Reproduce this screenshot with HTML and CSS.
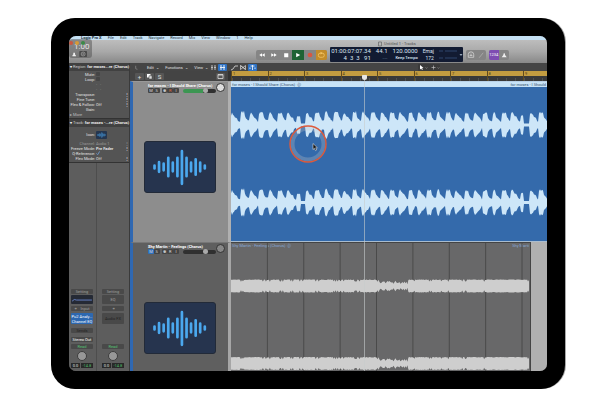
FILE: index.html
```html
<!DOCTYPE html>
<html lang="en">
<head>
<meta charset="utf-8">
<title>Untitled 1 - Tracks</title>
<link rel="stylesheet" href="styles.css">
</head>
<body>
<svg class="defs" aria-hidden="true">
  <symbol id="wave-icon" viewBox="0 0 72 52">
    <path d="M9.500 24.500v3M14.200 21v10M19 22.500v7M23.800 16.500v19M28.500 21.500v9M33.300 16.500v19M38 9.500v34M42.800 16.500v19M47.500 21.500v9M52.300 18v16M57 21.500v9M61.800 24.500v3" fill="none" stroke="#4ba8ee" stroke-width="2.800" stroke-linecap="round"/>
  </symbol>
</svg>
<main class="device">
  <div class="screen">
    <nav class="menubar">
      <a href="#"><b>Logic Pro X</b></a><a href="#">File</a><a href="#">Edit</a><a href="#">Track</a><a href="#">Navigate</a><a href="#">Record</a><a href="#">Mix</a><a href="#">View</a><a href="#">Window</a><a href="#">1</a><a href="#">Help</a>
    </nav>
    <header class="toolbar">
      <div class="lights"><i class="red"></i><i class="amber"></i><i class="green"></i></div>
      <div class="clock">
        <span>1:00</span>
        <svg viewBox="0 0 22 7"><path d="M1 6V5l1-1V2h2v2l1 1v1z" fill="#eee"/><rect x="9" width="9" height="7" rx="1" fill="#4a4a4a"/><circle cx="13.500" cy="3.500" r="2.300" fill="none" stroke="#bbb" stroke-width=".7"/><path d="M13.500 2.300v2.400" stroke="#bbb" stroke-width=".8"/></svg>
      </div>
      <h1><svg viewBox="0 0 4 5"><path d="M.5.500h3v4h-3z" fill="none" stroke="#666" stroke-width=".7"/></svg>Untitled 1 - Tracks</h1>
      <div class="controls">
        <div class="group transport">
          <button aria-label="Rewind"><svg viewBox="0 0 12 11"><path d="M6 3.500v4L3 5.500zM9 3.500v4L6 5.500z" fill="#fff"/></svg></button>
          <button aria-label="Forward"><svg viewBox="0 0 12 11"><path d="M3 3.500v4L6 5.500zM6 3.500v4l3-2z" fill="#fff"/></svg></button>
          <button aria-label="Stop"><svg viewBox="0 0 12 11"><path d="M4 3.500h4.500v4.500H4z" fill="#fff"/></svg></button>
          <button class="play" aria-label="Play"><svg viewBox="0 0 12 11"><path d="M4 3.200v4.800l4.500-2.400z" fill="#fff"/></svg></button>
          <button aria-label="Record"><svg viewBox="0 0 12 11"><circle cx="6" cy="5.500" r="2.600" fill="#d9573f"/></svg></button>
          <button class="cycle" aria-label="Cycle"><svg viewBox="0 0 12 11"><rect x="2.500" y="3.500" width="6.500" height="4.500" rx="2" fill="none" stroke="#f3c566" stroke-width=".9"/><path d="M5 2v3l2.300-1.500z" fill="#f3c566"/></svg></button>
        </div>
        <div class="lcd">
          <div class="time"><span>01:00:07:07.34</span><span>4&nbsp; 3&nbsp; 3 &nbsp; 91</span></div>
          <div class="rate"><span>44.1</span><span class="faint">---</span></div>
          <div class="tempo"><span>120.0000</span><span class="small">Keep Tempo</span></div>
          <div class="key"><span class="small">Emaj</span><span class="small">172</span></div>
          <svg class="meters" viewBox="0 0 24 13"><path d="M0 3h4M0 10h4M6 3h12M6 10h12" stroke="#38527c" stroke-width=".8"/><path d="M20.500 6h3L22 8z" fill="#9ab"/></svg>
        </div>
        <div class="group">
          <button class="narrow" aria-label="Tuner"><svg viewBox="0 0 10 11"><path d="M2 8V5a3 3 0 0 1 6 0v3zM3.500 6h3M5 6V4" fill="none" stroke="#ddd" stroke-width=".8"/></svg></button>
          <button class="narrow" aria-label="Edit"><svg viewBox="0 0 10 11"><path d="M3 8.500L7.500 3" stroke="#aaa" stroke-width="1"/></svg></button>
        </div>
        <div class="group">
          <button class="narrow count" aria-label="Count in">1234</button>
          <button class="narrow" aria-label="Metronome"><svg viewBox="0 0 10 11"><path d="M2.500 8h5.500L6.200 5.500 5.800 3.500H4.700L4.200 5.500z" fill="#eee"/></svg></button>
        </div>
      </div>
    </header>
    <div class="workspace">
      <aside class="inspector">
        <h2>▾ <span>Region:</span> for moses...re (Chorus)</h2>
        <div class="props">
          <div class="row"><label for="mute">Mute:</label><input type="checkbox" id="mute"></div>
          <div class="row"><label for="loop">Loop:</label><input type="checkbox" id="loop"></div>
          <div class="row dim"><span></span><span>- &nbsp; -</span></div>
          <div class="row dim"><span></span><span>- &nbsp; -</span></div>
          <div class="row"><span>Transpose:</span><span></span><i>⋮</i></div>
          <div class="row"><span>Fine Tune:</span><span></span><i>⋮</i></div>
          <div class="row"><span>Flex &amp; Follow:</span><span>Off</span><i>⋮</i></div>
          <div class="row"><span>Gain:</span><span></span></div>
          <div class="more">▸ More</div>
        </div>
        <h2>▾ <span>Track:</span> for moses -...re (Chorus)</h2>
        <div class="props track-props">
          <div class="row icon-row"><span>Icon:</span><svg class="mini" viewBox="0 0 72 52"><use href="#wave-icon"/></svg></div>
          <div class="row dim"><span>Channel:</span><span>Audio 1</span><i>⋮</i></div>
          <div class="row"><span>Freeze Mode:</span><b>Pre Fader</b><i>⋮</i></div>
          <div class="row"><label for="qref">Q-Reference:</label><input type="checkbox" id="qref" checked></div>
          <div class="row"><span>Flex Mode:</span><span>Off</span><i>⋮</i></div>
        </div>
        <div class="strips">
          <div class="strip">
            <button>Setting</button>
            <button class="eq on" aria-label="EQ"><svg viewBox="0 0 20 8"><path d="M1 5.500l2-1.500 2 .500h14" fill="none" stroke="#6b88ce" stroke-width=".8"/></svg></button>
            <button class="input">⚭ &nbsp; Input</button>
            <button class="fx on">Pu2 Analy...<br>Channel EQ</button>
            <button class="sends">Sends</button>
            <button class="out">Stereo Out</button>
            <button class="read">Read</button>
            <span class="knob"></span>
            <div class="vals"><span>0.0</span><span>-14.8</span></div>
          </div>
          <div class="strip">
            <button>Setting</button>
            <button class="eq">EQ</button>
            <button class="input">⚭</button>
            <button class="fx">Audio FX</button>
            <span class="fill"></span>
            <button class="read">Read</button>
            <span class="knob"></span>
            <div class="vals"><span>0.0</span><span>-14.8</span></div>
          </div>
        </div>
      </aside>
      <section class="tracks">
        <div class="actions">
          <button class="pick" aria-label="Hide"><svg viewBox="0 0 9 8"><path d="M3 2v3q0 1 2 1" fill="none" stroke="#999" stroke-width=".7"/></svg></button>
          <div class="menus"><button>Edit &nbsp;⌄</button><button>Functions &nbsp;⌄</button><button>View &nbsp;⌄</button></div>
          <div class="views">
            <button aria-label="List"><svg viewBox="0 0 9 7"><path d="M2 2h2M5 2h2M2 3.500h2M5 3.500h2M2 5h2M5 5h2" stroke="#ddd" stroke-width=".8"/></svg></button>
            <button class="on" aria-label="Grid"><svg viewBox="0 0 9 7"><path d="M2 2h2M5 2h2M2 3.500h5M2 5h2M5 5h2" stroke="#fff" stroke-width=".9"/></svg></button>
          </div>
          <div class="tools">
            <button aria-label="Automation"><svg viewBox="0 0 9 7"><path d="M1 6l2-1 2-3h3" fill="none" stroke="#ddd" stroke-width=".8"/></svg></button>
            <button aria-label="Flex"><svg viewBox="0 0 9 7"><path d="M1.500 1.500v4l5-4v4zM1.500 1.500l5 4" fill="none" stroke="#ddd" stroke-width=".7"/></svg></button>
            <button class="on" aria-label="Catch"><svg viewBox="0 0 9 7"><path d="M4.500 1v5M2.500 2h4M2 3.500v1.500M7 3.500v1.500" stroke="#fff" stroke-width=".8"/></svg></button>
          </div>
          <div class="cursors">
            <button aria-label="Pointer"><svg viewBox="0 0 10 7"><path d="M2 1v4.500l1.200-1 .8 1.500.8-.4-.7-1.500H5.500z" fill="#fff"/><path d="M7.500 3.500l1 .8 1-.8" fill="none" stroke="#aaa" stroke-width=".5"/></svg></button>
            <button aria-label="Marquee"><svg viewBox="0 0 10 7"><path d="M3.500 1.500v4M1.500 3.500h4" stroke="#ccc" stroke-width=".6"/><path d="M7.500 3.500l1 .8 1-.8" fill="none" stroke="#aaa" stroke-width=".5"/></svg></button>
          </div>
        </div>
        <div class="ruler-row">
          <div class="add">
            <button>+</button>
            <button aria-label="Duplicate"><svg viewBox="0 0 8 7"><path d="M1.500 1h3.500v3.500H1.500z" fill="#fff"/><path d="M3.500 2.800h3V6h-3z" fill="#ddd" stroke="#444" stroke-width=".5"/></svg></button>
            <button>S</button>
            <button class="panel" aria-label="Header settings"><svg viewBox="0 0 8 7"><path d="M1.500 1.500h5v4h-5zM1.500 2h5" fill="none" stroke="#ddd" stroke-width=".8"/></svg></button>
          </div>
          <div class="ruler"><span>1</span><span>2</span><span>3</span><span>4</span><span>5</span><span>6</span><span>7</span><span>8</span><span>9</span></div>
        </div>
        <article class="track selected">
          <div class="head">
            <div class="info">
              <div class="name">for moses - I Should Share (Chorus)</div>
              <div class="mix"><button>M</button><button>S</button><button class="sp">✽</button><button class="rec">R</button><button>I</button><input type="range" aria-label="Volume" value="72"></div>
            </div>
            <span class="pan"></span>
            <svg class="art" viewBox="0 0 72 52"><use href="#wave-icon"/></svg>
          </div>
          <div class="lane">
            <div class="region">
              <div class="title"><span>for moses - I Should Share (Chorus) &nbsp;⓪</span><span>for moses - I Should</span></div>
              <svg class="wave" data-kind="beats" viewBox="0 0 316 153" preserveAspectRatio="none"></svg>
            </div>
          </div>
        </article>
        <article class="track">
          <div class="head">
            <div class="info">
              <div class="name">Shy Martin - Feelings (Chorus)</div>
              <div class="mix"><button class="on">M</button><button>S</button><button class="sp">✽</button><button>R</button><button>I</button><input type="range" aria-label="Volume" value="72"></div>
            </div>
            <span class="pan"></span>
            <svg class="art" viewBox="0 0 72 52"><use href="#wave-icon"/></svg>
          </div>
          <div class="lane">
            <div class="region">
              <div class="title"><span>Shy Martin - Feelings (Chorus) &nbsp;⓪</span><span>Shy Marti</span></div>
              <svg class="wave" data-kind="dense" viewBox="0 0 300 122" preserveAspectRatio="none"></svg>
            </div>
          </div>
        </article>
        <div class="playhead"></div>
        <svg class="pointer" viewBox="0 0 38 38"><circle cx="19" cy="19" r="15.500" fill="none" stroke="#c9c9c9" stroke-opacity=".28" stroke-width="4"/><circle cx="19" cy="19" r="18" fill="none" stroke="#dd5a3c" stroke-width="1.500"/><path d="M24 18.500v6l1.400-1.200 1.100 2.300 1.200-.6-1.100-2.200h1.800z" fill="#111" stroke="#ddd" stroke-width=".6"/></svg>
      </section>
    </div>
  </div>
</main>
<script src="app.js"></script>
</body>
</html>
```
FILE: styles.css
```css
* { box-sizing: border-box; }
body {
  margin: 0;
  min-height: 100vh;
  padding: 18px 46px 19px 51px;
  display: flex;
  background: #fff;
  font: 4px/5px Roboto, "Liberation Sans", sans-serif;
  color: #e2e2e2;
}
button {
  font: inherit;
  color: inherit;
  border: 0;
  padding: 0;
  margin: 0;
  background: none;
  display: block;
  white-space: nowrap;
}
button svg { display: block; width: 100%; height: 100%; }
i { font-style: normal; }
.defs { position: absolute; width: 0; height: 0; }
.device {
  flex: 1;
  min-width: 0;
  display: flex;
  padding: 18px;
  background: #000;
  border-radius: 24px;
  box-shadow: 1px 0 0 #a8a8a8;
}
.screen {
  flex: 1;
  min-width: 0;
  display: flex;
  flex-direction: column;
  overflow: hidden;
  border-radius: 7px;
  background: #5d5d5d;
}

.menubar {
  display: flex;
  gap: 6px;
  padding-left: 12px;
  line-height: 4px;
  background: #c4e0f3;
}
.menubar a { color: #23303c; text-decoration: none; }

.toolbar {
  position: relative;
  height: 23px;
  padding-top: 1px;
  background: linear-gradient(#bdbdbd, #a9a9a9 50%, #888);
}
.lights { position: absolute; z-index: 1; top: 1px; left: 0; display: flex; gap: 2px; }
.lights i { width: 4px; height: 4px; border-radius: 50%; background: #cc553d; }
.lights .amber { background: #d79a35; }
.lights .green { background: #3c8a48; }
.clock {
  position: absolute;
  top: -1px;
  left: 0;
  width: 23px;
  height: 19px;
  padding-top: 4px;
  padding-left: 5px;
  border-radius: 3px;
  background: rgb(70 70 70 / 45%);
  color: #e6e6e6;
  font-size: 8px;
  line-height: 8px;
}
.clock svg { display: block; width: 22px; height: 6px; margin-left: -4px; }
h1 {
  display: flex;
  justify-content: center;
  gap: 2px;
  margin: 0;
  padding-left: 178px;
  font-size: 4px;
  font-weight: 400;
  line-height: 6px;
  color: #555;
}
h1 svg { width: 4px; height: 6px; }
.controls {
  display: flex;
  align-items: center;
  justify-content: center;
  gap: 3px;
  padding-left: 149px;
}
.controls > * { flex: none; }
.group { display: flex; height: 10px; border-radius: 2px; overflow: hidden; background: #858585; }
.group button { width: 12px; }
.group .narrow { width: 10px; }
.group .play { background: #1f6334; }
.group .cycle { background: #c38c29; width: 11px; }
.group .count { background: #7e4cb2; color: #fff; }
.lcd {
  display: flex;
  gap: 5px;
  height: 15px;
  padding: 1px 0 1px 1px;
  background: #121b32;
  border-radius: 1px;
  color: #dde6f3;
  font-size: 6px;
  line-height: 6px;
}
.lcd > div { display: flex; flex-direction: column; gap: 1px; align-items: flex-end; }
.lcd .small { font-size: 5px; }
.lcd .tempo .small { font-size: 4px; font-weight: 500; }
.lcd .faint { color: #51617d; }
.meters { width: 24px; height: 13px; }

.workspace { flex: 1; min-height: 0; display: flex; }
.inspector {
  width: 61px;
  flex: none;
  display: flex;
  flex-direction: column;
  background: #5d5d5d;
  border-right: 1px solid #3a3a3a;
}
h2 {
  margin: 0;
  height: 8px;
  padding-left: 1px;
  font-size: 4px;
  line-height: 8px;
  white-space: nowrap;
  background: #414141;
  color: #eee;
}
h2 span { font-weight: 400; color: #ccc; }
.props { padding: 1px 0; background: #545454; border-bottom: 1px solid #333; }
.row { display: grid; grid-template-columns: 26px 1fr 4px; column-gap: 1px; height: 5px; white-space: nowrap; }
.row > :first-child { text-align: right; justify-self: end; }
.dim { color: #999; }
.row input {
  appearance: none;
  width: 4px;
  height: 4px;
  margin: 0;
  border-radius: 1px;
  background: #454545;
}
.row input:checked { background: #6ea2dd; clip-path: polygon(0 50%, 40% 80%, 85% 0, 100% 10%, 45% 100%, 0 65%); }
.more { padding-left: 1px; color: #bbb; }
.icon-row { height: 13px; align-items: center; }
.mini { width: 11px; height: 8px; background: #25364f; border-radius: 1px; }
.strips { flex: 1; display: grid; grid-template-columns: 28px 1fr; }
.strip {
  display: flex;
  flex-direction: column;
  justify-content: flex-end;
  align-items: center;
  gap: 2px;
  padding: 0 3px 3px 2px;
  border-right: 1px solid #4d4d4d;
}
.strip + .strip { padding: 0 5px 3px; border: 0; }
.strip button { width: 100%; height: 5px; line-height: 5px; border-radius: 1px; background: #494949; color: #a0a0a0; text-align: center; }
.strip .eq { height: 9px; margin-top: -1px; }
.strip .eq.on { background: #252a35; }
.strip .fx { height: 11px; color: #222; }
.strip .fx.on { background: #2d68b0; color: #fff; }
.strip .sends { margin: 2px 0; color: #222; }
.strip .out { background: #484848; color: #fff; }
.strip .read { color: #55c174; }
.fill { height: 16px; }
.knob { flex: none; width: 10px; height: 10px; border-radius: 50%; background: #979797; border: 1px solid #3d3d3d; }
.vals { display: flex; gap: 1px; width: 100%; }
.vals span { flex: auto; background: #292929; text-align: center; height: 5px; }
.vals span + span { color: #4fba6a; }

.tracks { position: relative; flex: 1; min-width: 0; display: flex; flex-direction: column; overflow: hidden; }
.actions { display: flex; flex: none; height: 8px; background: #454545; align-items: center; }
.actions button { height: 7px; }
.pick { width: 17px; padding-right: 3px; }
.menus { width: 61px; display: flex; justify-content: space-between; line-height: 7px; }
.views { display: flex; padding-left: 1px; width: 22px; }
.views button, .tools button { width: 9px; }
.actions .on { background: #2e72c4; border-radius: 1px; }
.tools { display: flex; }
.cursors { display: flex; gap: 2px; margin: 0 107px 0 auto; background: #3a3a3a; border-radius: 1px; }
.cursors button { width: 10px; }
.ruler-row { display: flex; flex: none; height: 10px; background: #393939; }
.add { display: flex; align-items: center; gap: 1px; width: 101px; padding: 0 3px 0 5px; background: #444; border-right: 3px solid #333; }
.add button { width: 9px; height: 7px; line-height: 7px; background: #565656; border-radius: 1px; font-size: 6px; }
.add .panel { margin-left: auto; }
.ruler { flex: 1; display: grid; grid-template-columns: repeat(8, 1fr) 24px; }
.ruler span {
  border-left: 1px solid #5f4b1f;
  padding-left: 1px;
  color: #4b3a14;
  line-height: 5px;
  background:
    repeating-linear-gradient(90deg, #505050 0 1px, transparent 1px 9px) 0 7px / 100% 3px no-repeat,
    linear-gradient(#c39c40 0 5px, transparent 5px);
}
.track { display: flex; height: 161px; flex: none; }
.track + .track { flex: 1; min-height: 129px; overflow: hidden; }
.head {
  display: grid;
  grid-template-columns: 1fr 10px;
  align-content: start;
  width: 101px;
  flex: none;
  padding: 1px 2px 0 15px;
  background: #5f5f5f;
  border-left: 3px solid #2f68b2;
  border-right: 3px solid #a6a6a6;
  border-top: 1px solid #777;
}
.selected .head { background: #8d8d8d; border-top-color: #999; border-right-color: #b0b0b0; }
.name { font-weight: 700; line-height: 5px; color: #fff; white-space: nowrap; }
.mix { display: flex; align-items: center; }
.mix button { width: 6px; height: 5px; border-radius: 1px; background: #444; color: #ddd; }
.mix .sp { margin-left: 2px; }
.mix .on { background: #2d71bf; }
.mix .rec { color: #e06a3b; }
.mix input {
  appearance: none;
  width: 33px;
  height: 4px;
  margin: 0 0 0 4px;
  border-radius: 2px;
  background: #303030;
}
.selected .mix input { background: linear-gradient(90deg, #3c9652 62%, #303030 62%); }
.mix input::-webkit-slider-thumb { appearance: none; width: 5px; height: 5px; border-radius: 50%; background: #aaa; }
.pan { width: 9px; height: 9px; border-radius: 50%; background: #888; border: 1px solid #333; }
.selected .pan { background: #ddd; }
.art {
  grid-column: 1 / -1;
  width: 72px;
  height: 52px;
  margin-top: 48px;
  margin-left: -4px;
  border-radius: 3px;
  border: 1px solid #222a38;
  background: #26344e;
}
.info { min-width: 0; }
.lane { flex: 1; min-width: 0; display: flex; background: #b0b0b0; }
.region { flex: 1; min-width: 0; margin-right: 16px; background: #686869; border-top: 1px solid #444; border-right: 1px solid #444; }
.selected .region { margin-right: 0; background: #346aab; border-color: #b9d2e8; border-right: 0; border-bottom: 1px solid #a9bccf; }
.title { display: flex; justify-content: space-between; padding: 0 1px; height: 5px; color: #86a9dc; white-space: nowrap; }
.selected .title { background: #c8e3f7; color: #35516d; }
.wave { display: block; width: 100%; height: 153px; overflow: visible; }
.track + .track .wave { height: 122px; }
.playhead { position: absolute; left: 234px; top: 13px; bottom: 0; width: 1px; background: rgb(200 205 205 / 60%); }
.playhead::before { content: ""; position: absolute; left: -2px; top: -1px; width: 5px; height: 5px; border-radius: 1px 1px 3px 3px; background: #e5e5e5; }
.pointer { position: absolute; left: 159px; top: 62px; width: 38px; height: 38px; }
```
FILE: app.js
```js
// Draws the stereo waveforms of each region.
const NS = "http://www.w3.org/2000/svg";

function noise(n) {
  const v = Math.sin(n * 12.9898) * 43758.5453;
  return v - Math.floor(v);
}

const HIT = [11.5, 13, 12, 13, 12.5, 8, 6.5, 5, 4.5, 4.5];
const SWELL = [11, 13, 12, 10, 8.5, 8, 7, 5, 4, 3.5];

// Height of the drum-like waveform at a position, in pixels.
function beats(x) {
  const pos = x / 9.33;
  const beat = Math.floor(pos);
  const step = Math.floor((pos - beat) * 10);
  const shape = beat % 2 ? HIT : SWELL;
  let h = shape[step] * (0.92 + noise(beat) * 0.12) + noise(x) * 1.6 - 0.8;
  if (beat === 7 || beat === 31) h = step < 4 ? h * 0.75 : 1.5;
  return Math.max(1.5, h);
}

function dense(x) {
  const dip = x > 148 && x < 178 ? 2.5 : 0;
  const notch = noise(x * 3) > 0.88 ? 1.8 : 0;
  return 6.6 - dip * noise(x + 5) - dip * 0.4 - notch - noise(x) * 0.6;
}

function band(width, centre, height) {
  let top = "";
  let bottom = "";
  for (let x = 0; x <= width; x += 1) {
    top += `L${x} ${(centre - height(x)).toFixed(1)}`;
    bottom = `L${x} ${(centre + height(x)).toFixed(1)}` + bottom;
  }
  return "M0 " + centre + top + bottom + "Z";
}

function add(svg, d, attrs) {
  const path = document.createElementNS(NS, "path");
  path.setAttribute("d", d);
  for (const key in attrs) path.setAttribute(key, attrs[key]);
  svg.append(path);
}

document.querySelectorAll(".wave").forEach((svg) => {
  const isBeats = svg.dataset.kind === "beats";
  if (isBeats) {
    add(svg, band(316, 38, beats), { fill: "#cde6f8" });
    add(svg, band(316, 115.5, beats), { fill: "#cde6f8" });
  } else {
    for (let i = 1; i <= 8; i += 1) {
      add(svg, `M${i * 36.5} -5V130`, { stroke: "#4a4a4a", "stroke-width": 1 });
    }
    add(svg, band(299, 38, dense), { fill: "#cecece" });
    add(svg, band(299, 115.5, dense), { fill: "#cecece" });
  }
});
```
